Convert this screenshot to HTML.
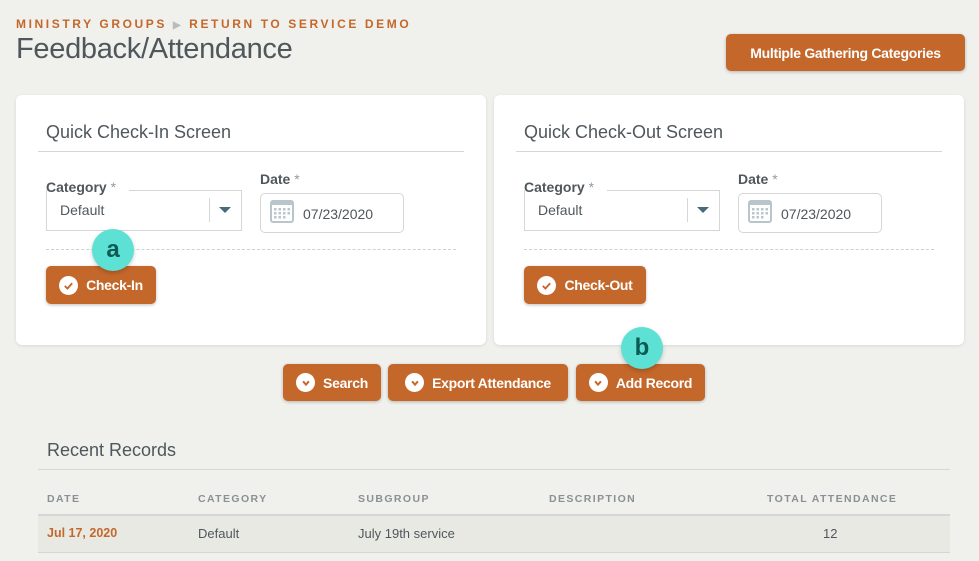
<!DOCTYPE html>
<html><head><style>
*{margin:0;padding:0;box-sizing:border-box}
body{width:979px;height:561px;background:#f0f0ec;font-family:"Liberation Sans",sans-serif;position:relative;overflow:hidden;color:#4a5055}
.a{position:absolute;white-space:nowrap}
.bc{left:16px;top:17px;font-size:12px;font-weight:bold;letter-spacing:2.6px;color:#c4672a}
.h1{left:16px;top:33px;font-size:29px;color:#4f575c;letter-spacing:-0.3px}
.btn{position:absolute;background:#c4672a;color:#fff;font-weight:bold;font-size:14px;border-radius:5px;box-shadow:0 1px 3px rgba(0,0,0,.25);display:flex;align-items:center;justify-content:center;letter-spacing:-0.3px}
.card{position:absolute;top:95px;width:470px;height:250px;background:#fff;border-radius:6px;box-shadow:0 1px 3px rgba(0,0,0,.1)}
.ct{position:absolute;left:30px;top:27px;font-size:18px;color:#4f575c}
.cl{position:absolute;left:22px;top:56px;width:426px;border-top:1px solid #d6d6d6}
.lab{position:absolute;font-size:14px;font-weight:bold;color:#4f575c}
.lab span{color:#999;font-weight:normal}
.sel{position:absolute;left:30px;top:95px;width:196px;height:41px;border:1px solid #d6d6d6;border-top:none}
.sel:before{content:"";position:absolute;left:82px;right:-1px;top:0;border-top:1px solid #d6d6d6}
.sel .t{position:absolute;left:13px;top:12px;font-size:14px;color:#4f575c}
.sel .d{position:absolute;left:162px;top:8px;height:24px;border-left:1px solid #d6d6d6}
.sel .c{position:absolute;left:172px;top:17px;border-left:6px solid transparent;border-right:6px solid transparent;border-top:6px solid #4a6a7a}
.dt{position:absolute;left:244px;top:98px;width:144px;height:40px;border:1px solid #d6d6d6;border-radius:5px}
.dt .t{position:absolute;left:42px;top:12px;font-size:14px;color:#4f575c}
.dt svg{position:absolute;left:9px;top:5px}
.dash{position:absolute;left:30px;top:154px;width:410px;border-top:1px dashed #d0d0d0}
.ck{width:19px;height:19px;border-radius:50%;background:#fff;margin-right:8px;display:flex;align-items:center;justify-content:center}
.badge{position:absolute;width:42px;height:42px;border-radius:50%;background:#5ce1d4;color:#0d5a55;font-weight:bold;font-size:24px;display:flex;align-items:center;justify-content:center;box-shadow:0 2px 4px rgba(0,0,0,.2);line-height:1}
.th{top:493px;font-size:10.5px;font-weight:bold;letter-spacing:1.4px;color:#8a9095}
.td{top:526px;font-size:13px;color:#4f575c}
</style></head><body>
<div class="a bc">MINISTRY GROUPS <span style="color:#bbb;font-size:10px">&#9654;</span> RETURN TO SERVICE DEMO</div>
<div class="a h1">Feedback/Attendance</div>
<div class="btn" style="left:726px;top:34px;width:239px;height:37px;font-size:14px">Multiple Gathering Categories</div>

<div class="card" style="left:16px">
<div class="ct">Quick Check-In Screen</div><div class="cl"></div>
<div class="lab" style="left:30px;top:84px">Category <span>*</span></div>
<div class="sel"><div class="t">Default</div><div class="d"></div><div class="c"></div></div>
<div class="lab" style="left:244px;top:76px">Date <span>*</span></div>
<div class="dt"><svg width="24" height="24" viewBox="0 0 24 24"><rect x="1" y="2" width="22" height="21" rx="2" fill="#fff" stroke="#b8c6cc" stroke-width="2"/><rect x="1" y="2" width="22" height="4" fill="#b8c6cc"/><g fill="#b8c6cc"><rect x="4" y="9" width="2.5" height="2.5"/><rect x="8.5" y="9" width="2.5" height="2.5"/><rect x="13" y="9" width="2.5" height="2.5"/><rect x="17.5" y="9" width="2.5" height="2.5"/><rect x="4" y="13" width="2.5" height="2.5"/><rect x="8.5" y="13" width="2.5" height="2.5"/><rect x="13" y="13" width="2.5" height="2.5"/><rect x="17.5" y="13" width="2.5" height="2.5"/><rect x="4" y="17" width="2.5" height="2.5"/><rect x="8.5" y="17" width="2.5" height="2.5"/><rect x="13" y="17" width="2.5" height="2.5"/></g></svg><div class="t">07/23/2020</div></div>
<div class="dash"></div>
<div class="btn" style="left:30px;top:171px;width:110px;height:38px"><div class="ck"><svg width="11" height="11" viewBox="0 0 12 12"><path d="M2 6.5l2.8 2.8L10 3.5" stroke="#c4672a" stroke-width="2" fill="none"/></svg></div>Check-In</div>
</div>
<div class="card" style="left:494px">
<div class="ct">Quick Check-Out Screen</div><div class="cl"></div>
<div class="lab" style="left:30px;top:84px">Category <span>*</span></div>
<div class="sel"><div class="t">Default</div><div class="d"></div><div class="c"></div></div>
<div class="lab" style="left:244px;top:76px">Date <span>*</span></div>
<div class="dt"><svg width="24" height="24" viewBox="0 0 24 24"><rect x="1" y="2" width="22" height="21" rx="2" fill="#fff" stroke="#b8c6cc" stroke-width="2"/><rect x="1" y="2" width="22" height="4" fill="#b8c6cc"/><g fill="#b8c6cc"><rect x="4" y="9" width="2.5" height="2.5"/><rect x="8.5" y="9" width="2.5" height="2.5"/><rect x="13" y="9" width="2.5" height="2.5"/><rect x="17.5" y="9" width="2.5" height="2.5"/><rect x="4" y="13" width="2.5" height="2.5"/><rect x="8.5" y="13" width="2.5" height="2.5"/><rect x="13" y="13" width="2.5" height="2.5"/><rect x="17.5" y="13" width="2.5" height="2.5"/><rect x="4" y="17" width="2.5" height="2.5"/><rect x="8.5" y="17" width="2.5" height="2.5"/><rect x="13" y="17" width="2.5" height="2.5"/></g></svg><div class="t">07/23/2020</div></div>
<div class="dash"></div>
<div class="btn" style="left:30px;top:171px;width:122px;height:38px"><div class="ck"><svg width="11" height="11" viewBox="0 0 12 12"><path d="M2 6.5l2.8 2.8L10 3.5" stroke="#c4672a" stroke-width="2" fill="none"/></svg></div>Check-Out</div>
</div>
<div class="badge" style="left:92px;top:229px">a</div>

<div class="btn" style="left:283px;top:364px;width:98px;height:37px"><div class="ck"><svg width="10" height="10" viewBox="0 0 12 12"><path d="M2.5 4l3.5 4 3.5-4" stroke="#c4672a" stroke-width="2.4" fill="none"/></svg></div>Search</div>
<div class="btn" style="left:388px;top:364px;width:180px;height:37px"><div class="ck"><svg width="10" height="10" viewBox="0 0 12 12"><path d="M2.5 4l3.5 4 3.5-4" stroke="#c4672a" stroke-width="2.4" fill="none"/></svg></div>Export Attendance</div>
<div class="btn" style="left:576px;top:364px;width:129px;height:37px"><div class="ck"><svg width="10" height="10" viewBox="0 0 12 12"><path d="M2.5 4l3.5 4 3.5-4" stroke="#c4672a" stroke-width="2.4" fill="none"/></svg></div>Add Record</div>
<div class="badge" style="left:621px;top:327px">b</div>

<div class="a" style="left:47px;top:440px;font-size:18px;color:#4f575c">Recent Records</div>
<div class="a" style="left:38px;top:469px;width:912px;border-top:1px solid #d6d6d6"></div>
<div class="a th" style="left:47px">DATE</div>
<div class="a th" style="left:198px">CATEGORY</div>
<div class="a th" style="left:358px">SUBGROUP</div>
<div class="a th" style="left:549px">DESCRIPTION</div>
<div class="a th" style="left:767px">TOTAL ATTENDANCE</div>
<div class="a" style="left:38px;top:514px;width:912px;height:39px;background:#e9e9e4;border-top:2px solid #d6d6d6;border-bottom:1px solid #d6d6d6"></div>
<div class="a td" style="left:47px;color:#c4672a;font-weight:bold;font-size:12.5px">Jul 17, 2020</div>
<div class="a td" style="left:198px">Default</div>
<div class="a td" style="left:358px">July 19th service</div>
<div class="a td" style="left:823px">12</div>
</body></html>
